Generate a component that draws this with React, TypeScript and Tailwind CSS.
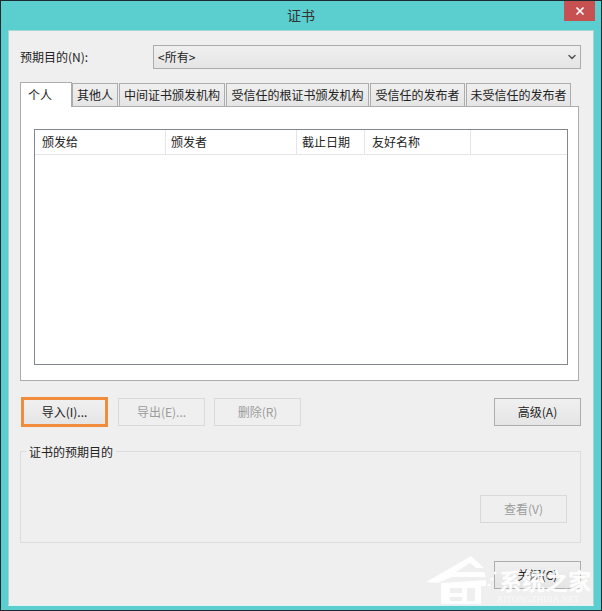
import { ChevronDown, X } from "lucide-react";

const tabs = [
  { label: "其他人", w: "w-[46px]" },
  { label: "中间证书颁发机构", w: "w-[106px]" },
  { label: "受信任的根证书颁发机构", w: "w-[143px]" },
  { label: "受信任的发布者", w: "w-[95px]" },
  { label: "未受信任的发布者", w: "w-[105px]" },
];

const columns = [
  { label: "颁发给", w: "w-[131px]", pad: "pl-[7px]" },
  { label: "颁发者", w: "w-[131px]", pad: "pl-[5px]" },
  { label: "截止日期", w: "w-[68px]", pad: "pl-[5px]" },
  { label: "友好名称", w: "w-[106px]", pad: "pl-[7px]" },
];

const Btn = ({ label, disabled, className = "" }: { label: string; disabled?: boolean; className?: string }) => (
  <div
    className={`h-[28px] w-[87px] flex items-center justify-center border ${
      disabled ? "border-[#d9d9d9] bg-[#efefef] text-[#9c9c9c]" : "border-[#adadad] bg-gradient-to-b from-[#f0f0f0] to-[#e5e5e5] text-[#222]"
    } ${className}`}
  >
    {label}
  </div>
);

// site watermark over the bottom right corner
const Watermark = () => (
  <div className="absolute left-[425px] top-[552px] w-[170px] h-[57px] text-white pointer-events-none">
    <svg width="74" height="56" viewBox="0 0 74 56" className="absolute left-0 top-0" fill="#ffffff" fillOpacity="0.9">
      <path d="M0 29 L28 13 L45 3 L58 15 L50 15 L44 10 L30 19 L58 19 L60 24 L26 24 L12 30 Z" />
      <path fillRule="evenodd" d="M15 30 L60 27 L60 33 L55 33 L55 51 L15 51 Z M24 35 L24 40 L36 40 L36 35 Z M24 44 L24 48 L36 48 L36 44 Z M41 35 L41 48 L49 48 L49 35 Z" />
      <circle cx="69" cy="20" r="1.5" />
      <circle cx="66" cy="26" r="1.5" />
      <circle cx="63" cy="32" r="1.5" />
    </svg>
    <div className="absolute left-[73px] top-[13px] text-[23px] leading-[28px] font-bold whitespace-nowrap text-white/90">系统之家</div>
    <div className="absolute left-[71px] top-[41px] text-[9px] leading-[10px] font-['Liberation_Serif',serif] whitespace-nowrap text-white/70">XITONGZHIJIA.NET</div>
  </div>
);

export default function App() {
  return (
    <div className="relative w-[602px] h-[611px] overflow-hidden bg-[#5bcfcf] border border-[#1c2b2f] text-[12px] text-[#222] font-['Noto_Sans_CJK_SC','Noto_Sans',sans-serif]">
      <div className="relative h-[29px] flex items-center justify-center text-[14px] text-[#333]">
        证书
        <div className="absolute right-[6px] top-0 w-[31px] h-[20px] bg-[#c75050] flex items-center justify-center">
          <X size={12} strokeWidth={3.5} className="text-white" />
        </div>
      </div>

      <div className="mx-[7px] h-[576px] bg-[#efefef] border border-[#a9d5d5] border-b-[#dff5f5] px-[11px]">
        <div className="mt-[15px] flex items-center h-[24px] -translate-y-px">
          <div className="w-[133px]">预期目的(N):</div>
          <div className="w-[428px] h-[24px] flex items-center justify-between pl-[4px] pr-[2px] border border-[#acacac] bg-gradient-to-b from-[#f0f0f0] to-[#e5e5e5]">
            <span>&lt;所有&gt;</span>
            <ChevronDown size={12} strokeWidth={3} className="text-[#555]" />
          </div>
        </div>

        <div className="mt-[11px] flex items-end h-[25px]">
          <div className="relative z-10 w-[52px] h-[25px] -mb-px pl-[7px] pt-[3px] bg-white border border-b-0 border-[#acacac]">个人</div>
          {tabs.map((t, i) => (
            <div
              key={t.label}
              className={`${t.w} ${i > 0 ? "ml-px" : ""} h-[23px] flex items-center justify-center border border-b-0 border-[#acacac] bg-gradient-to-b from-[#f0f0f0] to-[#e5e5e5] whitespace-nowrap`}
            >
              {t.label}
            </div>
          ))}
        </div>

        <div className="w-[559px] h-[275px] bg-white border border-[#acacac] pt-[22px] px-[13px]">
          <div className="w-[534px] h-[236px] border border-[#828790]">
            <div className="h-[25px] flex border-b border-[#e5e5e5]">
              {columns.map((c) => (
                <div key={c.label} className={`${c.w} ${c.pad} flex items-center border-r border-[#e5e5e5]`}>
                  {c.label}
                </div>
              ))}
            </div>
          </div>
        </div>

        <div className="mt-[17px] flex items-center h-[28px]">
          <Btn label="导入(I)..." className="ml-px !h-[30px] !border-[3px] !border-[#f08c3c]" />
          <Btn label="导出(E)..." disabled className="ml-[10px]" />
          <Btn label="删除(R)" disabled className="ml-[9px]" />
          <Btn label="高级(A)" className="ml-auto mr-px" />
        </div>

        <div className="relative mt-[25px] w-[561px] h-[92px] border border-[#dcdcdc] flex justify-end items-start pt-[43px] pr-[13px]">
          <div className="absolute left-[5px] -top-[9px] px-[3px] leading-[17px] bg-[#efefef]">证书的预期目的</div>
          <Btn label="查看(V)" disabled />
        </div>

        <div className="mt-[18px] flex justify-end pr-px">
          <Btn label="关闭(C)" />
        </div>
      </div>

      <Watermark />
    </div>
  );
}
